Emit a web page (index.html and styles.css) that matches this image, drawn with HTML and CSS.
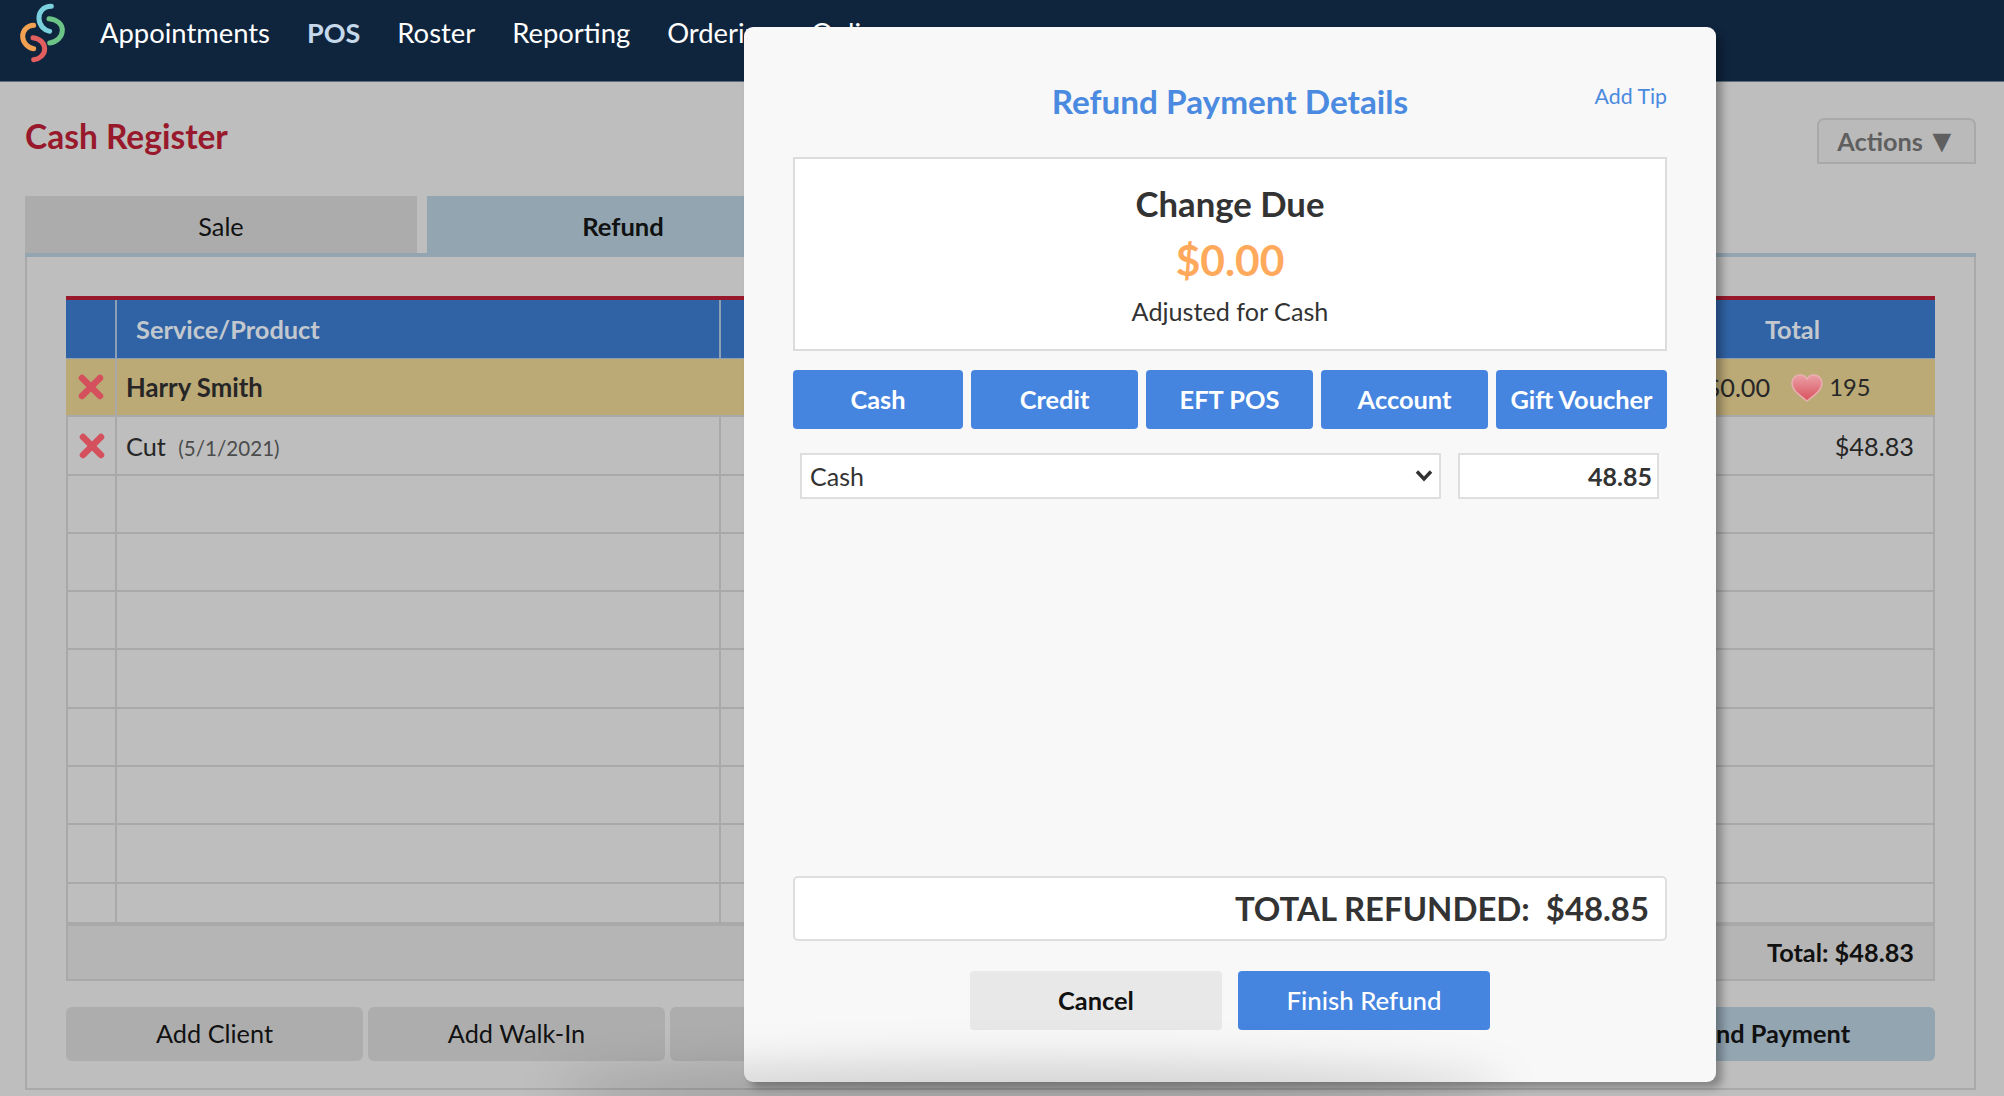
FILE: index.html
```html
<!DOCTYPE html>
<html lang="en">
<head>
<meta charset="utf-8">
<title>Cash Register</title>
<link rel="stylesheet" href="styles.css">
</head>
<body>
<header class="topbar">
  <svg class="logo" viewBox="60 10 144 180" width="48" height="60" fill="none" stroke-linecap="round" stroke-width="15">
    <path stroke="#7bd0dd" d="M157 20C132 20 119 38 120 57C121 78 136 92 152 95"/>
    <path stroke="#6cc487" d="M150 57C176 60 190 74 190 92C190 112 172 128 152 130"/>
    <path stroke="#f0a252" d="M104 77C84 78 71 92 71 110C71 130 88 145 104 147"/>
    <path stroke="#e35f5f" d="M102 114C122 116 137 130 137 148C137 165 122 178 104 180"/>
  </svg>
  <nav class="nav">
    <a class="nav-link">Appointments</a>
    <a class="nav-link nav-active">POS</a>
    <a class="nav-link">Roster</a>
    <a class="nav-link">Reporting</a>
    <a class="nav-link">Ordering</a>
    <a class="nav-link">Online</a>
  </nav>
</header>

<main class="page">
  <div class="title-row">
    <h1 class="page-title">Cash Register</h1>
    <button class="actions">Actions <span class="actions-arrow">▼</span></button>
  </div>
  <div class="tabs">
    <div class="tab">Sale</div>
    <div class="tab tab-active">Refund</div>
  </div>
  <section class="panel">
    <table class="register">
      <colgroup>
        <col class="col-x"><col class="col-name"><col class="col-mid"><col class="col-total">
      </colgroup>
      <thead>
        <tr><th></th><th class="th-name">Service/Product</th><th></th><th class="th-total">Total</th></tr>
      </thead>
      <tbody>
        <tr class="client-row">
          <td class="cell-x"><svg class="x-icon" viewBox="0 0 28 28"><path d="M5 5L23 23M23 5L5 23"/></svg></td>
          <td class="client-name" colspan="2">Harry Smith</td>
          <td class="client-meta"><span class="client-wrap"><span>$0.00</span>
            <svg class="heart" viewBox="0 0 32 28"><defs><linearGradient id="hg" x1="0" y1="0" x2="0" y2="1"><stop offset="0" stop-color="#eba0a6"/><stop offset="1" stop-color="#d8505c"/></linearGradient></defs><path fill="url(#hg)" stroke="#e8b0b0" stroke-width="1.5" d="M16 27C10 22 1 17 1 9C1 4 5 1 9 1C12 1 15 3 16 5C17 3 20 1 23 1C27 1 31 4 31 9C31 17 22 22 16 27Z"/></svg>
            <span class="points">195</span></span></td>
        </tr>
        <tr>
          <td class="cell-x cell-x-item"><svg class="x-icon" viewBox="0 0 28 28"><path d="M5 5L23 23M23 5L5 23"/></svg></td>
          <td class="item-name">Cut <small class="item-date">(5/1/2021)</small></td>
          <td></td>
          <td class="item-total">$48.83</td>
        </tr>
        <tr><td></td><td></td><td></td><td></td></tr>
        <tr><td></td><td></td><td></td><td></td></tr>
        <tr><td></td><td></td><td></td><td></td></tr>
        <tr><td></td><td></td><td></td><td></td></tr>
        <tr><td></td><td></td><td></td><td></td></tr>
        <tr><td></td><td></td><td></td><td></td></tr>
        <tr><td></td><td></td><td></td><td></td></tr>
        <tr class="short-row"><td></td><td></td><td></td><td></td></tr>
      </tbody>
      <tfoot>
        <tr><td colspan="4">Total: $48.83</td></tr>
      </tfoot>
    </table>
    <div class="panel-actions">
      <button class="grey-btn">Add Client</button>
      <button class="grey-btn">Add Walk-In</button>
      <button class="grey-btn">Add Item</button>
      <button class="grey-btn primary-btn">Refund Payment</button>
    </div>
  </section>
</main>

<div class="modal">
  <div class="modal-head">
    <span></span>
    <h2 class="modal-title">Refund Payment Details</h2>
    <a class="add-tip">Add Tip</a>
  </div>
  <div class="change-box">
    <div class="change-label">Change Due</div>
    <div class="change-value">$0.00</div>
    <div class="change-note">Adjusted for Cash</div>
  </div>
  <div class="pay-types">
    <button class="pay-btn pay-cash">Cash</button>
    <button class="pay-btn">Credit</button>
    <button class="pay-btn">EFT POS</button>
    <button class="pay-btn">Account</button>
    <button class="pay-btn pay-gift">Gift Voucher</button>
  </div>
  <div class="pay-line">
    <div class="select-wrap">
      <select class="pay-select"><option>Cash</option></select>
      <svg class="chevron" viewBox="0 0 18 13"><path d="M2 2.5L9 10L16 2.5"/></svg>
    </div>
    <input class="pay-amount" type="text" value="48.85">
  </div>
  <div class="total-box">TOTAL REFUNDED:&nbsp; $48.85</div>
  <div class="modal-actions">
    <button class="modal-btn cancel-btn">Cancel</button>
    <button class="modal-btn finish-btn">Finish Refund</button>
  </div>
</div>
</body>
</html>
```

FILE: styles.css
```css
* { box-sizing: border-box; }
html, body { height: 100%; }
body {
  margin: 0;
  height: 1096px;
  overflow: hidden;
  position: relative;
  background: #bebebe;
  color: #262626;
  font-family: Lato, "Liberation Sans", sans-serif;
  font-size: 25.3px;
}
button { font-family: inherit; border: 0; }

.topbar {
  height: 82px;
  background: #0f253e;
  border-bottom: 1px solid #5f6c7c;
  display: flex;
  align-items: flex-start;
  padding-left: 19px;
}
.logo { margin-top: 3px; flex: none; }
.nav { display: flex; gap: 37px; margin-left: 33px; margin-top: 15px; }
.nav-link { color: #fff; font-size: 27.4px; line-height: 36px; white-space: nowrap; }
.nav-active { color: #c6d9ea; font-weight: 700; font-size: 27px; }

.page { padding: 0 28px 0 25px; }
.title-row {
  height: 114px;
  display: flex;
  justify-content: space-between;
  align-items: flex-start;
}
.page-title {
  margin: 32px 0 0;
  font-size: 33.5px;
  line-height: 44px;
  color: #98192b;
  font-weight: 700;
}
.actions {
  margin-top: 36px;
  width: 159px;
  height: 46px;
  background: #bababa;
  border: 2px solid #a9a9a9;
  border-radius: 7px 7px 0 0;
  color: #5f5f5f;
  font-size: 25.3px;
  font-weight: 700;
  padding: 0 0 0 2px;
}
.actions-arrow { font-size: 32px; line-height: 20px; vertical-align: -1px; margin-left: -3px; }

.tabs {
  display: flex;
  gap: 10px;
  border-bottom: 4px solid #92a5b1;
  height: 61px;
}
.tab {
  width: 392px;
  height: 57px;
  background: #acacac;
  color: #111;
  font-size: 25.3px;
  text-align: center;
  line-height: 60px;
}
.tab-active { background: #92a5b1; height: 61px; font-weight: 700; font-size: 25.6px; }

.panel {
  height: 833px;
  border: 2px solid #a9a9a9;
  border-top: 0;
  padding: 39px 38px 0 39px;
}

.register {
  width: 1869px;
  table-layout: fixed;
  border-collapse: separate;
  border-spacing: 0;
  border-top: 4px solid #98192b;
}
.col-x { width: 49px; }
.col-name { width: 604px; }
.col-mid { width: 931px; }
.col-total { width: 285px; }
.register thead th {
  height: 59px;
  background: #3063a5;
  color: #c3c8cf;
  font-size: 25.4px;
  font-weight: 700;
  border-left: 2px solid #8d9fb5;
  border-bottom: 1px solid #8d9fb5;
  text-align: left;
  padding: 0;
}
.register thead th:first-child { border-left: 0; }
.register thead th:last-child { border-left: 0; }
.register thead .th-name { padding-left: 19px; }
.register thead .th-total { text-align: center; }
.register tbody td {
  height: 58.3px;
  padding: 0;
  border-bottom: 2px solid #a9a9a9;
  border-left: 2px solid #a9a9a9;
}
.register tbody td:last-child { border-left: 0; border-right: 2px solid #a9a9a9; }
.register tbody .short-row td { height: 38px; border-bottom: 0; }
.client-row td { background: #bba976; }
.register tbody .client-row td:first-child { border-left: 0; }
.register tbody .client-row td:last-child { border-right: 0; }
.cell-x { text-align: center; line-height: 0; }
.register tbody .cell-x-item { padding-top: 2px; }
.x-icon { width: 28px; height: 28px; fill: none; stroke: #d4505c; stroke-width: 6.5; stroke-linecap: round; }
.client-name { font-weight: 700; font-size: 25.7px; padding-left: 9px !important; }
.client-meta { text-align: center; padding-right: 9px !important; }
.client-wrap { display: inline-flex; align-items: center; }
.heart { width: 32px; height: 28px; margin: 2px 6px 0 21px; }
.points { font-size: 23.7px; }
.item-name { padding: 2px 0 0 9px !important; }
.item-date { font-size: 20.6px; color: #4c4c4c; margin-left: 6px; }
.item-total { text-align: right; padding: 2px 19px 0 0 !important; }
.register tfoot td {
  height: 59px;
  background: #b5b5b5;
  border: 2px solid #a9a9a9;
  border-top-width: 4px;
  text-align: right;
  padding: 0 19px 0 0;
  font-size: 25.3px;
  font-weight: 700;
  color: #111;
}

.panel-actions { display: flex; gap: 5px; margin: 26px 1px 0 0; }
.grey-btn {
  width: 297px;
  height: 54px;
  background: #adadad;
  border-radius: 6px;
  color: #111;
  font-size: 25.3px;
  padding: 0 0 2px;
}
.primary-btn { width: 356px; margin-left: auto; background: #92a5b1; font-weight: 700; }

.modal {
  position: absolute;
  left: 744px;
  top: 27px;
  width: 972px;
  height: 1055px;
  background: #f8f8f8;
  border-radius: 9px;
  box-shadow: 6px 6px 9px rgba(0, 0, 0, .3);
  padding: 0 49px 52px 49px;
  display: flex;
  flex-direction: column;
}
.modal::after {
  content: "";
  position: absolute;
  left: -190px;
  right: 210px;
  bottom: -34px;
  height: 52px;
  border-radius: 50%;
  background: rgba(0, 0, 0, .16);
  filter: blur(22px);
  pointer-events: none;
}
.modal-head {
  height: 130px;
  display: grid;
  grid-template-columns: 1fr auto 1fr;
  align-items: start;
}
.modal-title {
  margin: 53px 0 0;
  font-size: 33.3px;
  line-height: 42px;
  color: #4a8ae0;
  font-weight: 700;
}
.add-tip {
  justify-self: end;
  margin-top: 54px;
  color: #4a8ae0;
  font-size: 21.3px;
  line-height: 30px;
}
.change-box {
  height: 194px;
  background: #fff;
  border: 2px solid #dcdcdc;
  text-align: center;
  padding-top: 23px;
}
.change-label { font-size: 34.7px; line-height: 44px; font-weight: 700; color: #333; }
.change-value { font-size: 42.5px; line-height: 56px; margin-top: 6px; font-weight: 700; color: #ffa95c; }
.change-note { font-size: 25.2px; line-height: 36px; margin-top: 5px; color: #333; }

.pay-types { display: flex; gap: 8px; margin-top: 19px; }
.pay-btn {
  flex: 167px 0 0;
  height: 59px;
  background: #4585e0;
  color: #fff;
  border-radius: 4px;
  font-size: 25.4px;
  font-weight: 700;
  padding: 0 0 2px;
}
.pay-cash { flex-basis: 170px; }
.pay-gift { flex-basis: 171px; }

.pay-line { display: flex; justify-content: space-between; margin-top: 24px; padding: 0 8px 0 7px; }
.select-wrap { position: relative; width: 641px; height: 46px; }
.pay-select {
  width: 100%;
  height: 100%;
  appearance: none;
  background: #fff;
  border: 2px solid #dedede;
  border-radius: 0;
  padding: 0 0 0 8px;
  font-family: inherit;
  font-size: 25px;
  color: #333;
}
.chevron {
  position: absolute;
  right: 8px;
  top: 16px;
  width: 18px;
  height: 13px;
  fill: none;
  stroke: #333;
  stroke-width: 3.4;
}
.pay-amount {
  width: 201px;
  height: 46px;
  background: #fff;
  border: 2px solid #dedede;
  padding: 0 5px 0 0;
  text-align: right;
  font-family: inherit;
  font-size: 25px;
  font-weight: 700;
  color: #333;
}

.total-box {
  margin-top: auto;
  height: 65px;
  background: #fff;
  border: 2px solid #dedede;
  border-radius: 5px;
  padding-right: 16px;
  text-align: right;
  font-size: 32.9px;
  line-height: 61px;
  font-weight: 700;
  color: #333;
}
.modal-actions { display: flex; justify-content: center; gap: 16px; margin-top: 30px; }
.modal-btn {
  width: 252px;
  height: 59px;
  border-radius: 4px;
  font-size: 25.4px;
  padding: 0 0 2px;
}
.cancel-btn { background: #e8e8e8; color: #111; font-weight: 700; }
.finish-btn { background: #4585e0; color: #fff; font-weight: 500; font-size: 25.8px; }
```
